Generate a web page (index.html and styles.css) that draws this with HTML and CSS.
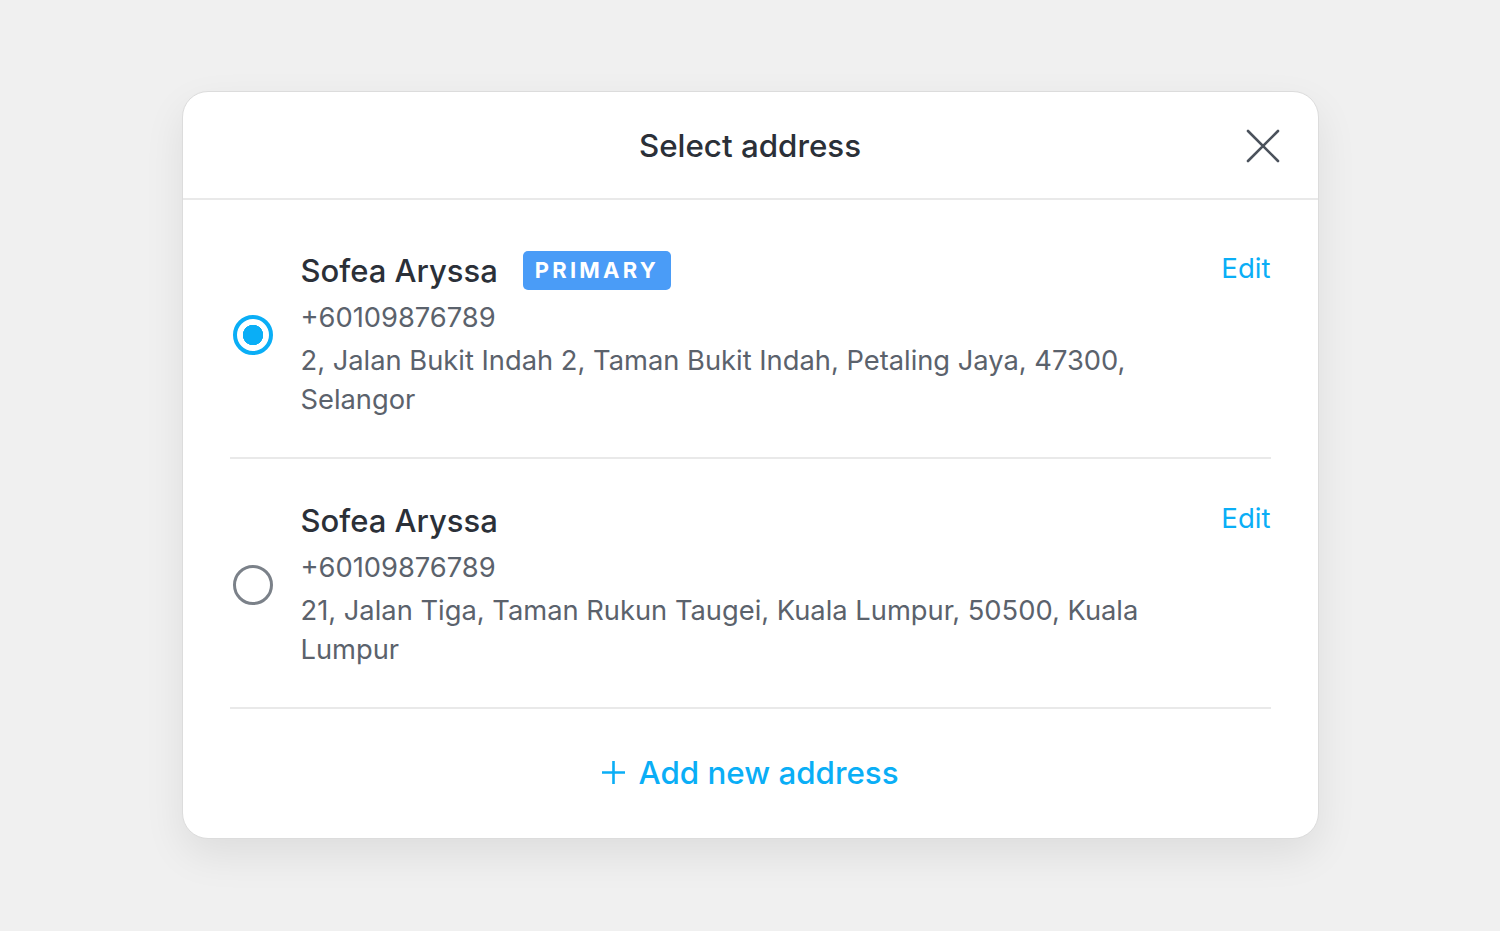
FILE: index.html
```html
<!doctype html>
<html lang="en">
  <head>
    <meta charset="UTF-8" />
    <meta name="viewport" content="width=device-width, initial-scale=1.0" />
    <title>Select address</title>
    <link rel="stylesheet" href="styles.css">
  </head>
  <body>
    <div class="modal">
      <div class="modal-header">
        <h1>Select address</h1>
        <button class="close-button" aria-label="Close">
          <svg width="34" height="34" viewBox="0 0 34 34" fill="none">
            <path d="M2 2 L32 32 M32 2 L2 32" stroke="#4b525c" stroke-width="2.6" stroke-linecap="round" />
          </svg>
        </button>
      </div>

      <div class="address-list">
        <div class="address-row">
          <span class="radio checked"></span>
          <div class="address-info">
            <div class="address-name">
              Sofea Aryssa
              <span class="badge">PRIMARY</span>
            </div>
            <div class="address-phone">+60109876789</div>
            <div class="address-text">2, Jalan Bukit Indah 2, Taman Bukit Indah, Petaling Jaya, 47300, Selangor</div>
          </div>
          <a class="edit-link" href="#">Edit</a>
        </div>

        <div class="address-row">
          <span class="radio"></span>
          <div class="address-info">
            <div class="address-name">Sofea Aryssa</div>
            <div class="address-phone">+60109876789</div>
            <div class="address-text">21, Jalan Tiga, Taman Rukun Taugei, Kuala Lumpur, 50500, Kuala Lumpur</div>
          </div>
          <a class="edit-link" href="#">Edit</a>
        </div>
      </div>

      <div class="modal-footer">
        <a class="add-link" href="#">
          <svg width="25" height="25" viewBox="0 0 25 25" fill="none">
            <path d="M12.5 1 V24 M1 12.5 H24" stroke="currentColor" stroke-width="2.6" />
          </svg>
          Add new address
        </a>
      </div>
    </div>
  </body>
</html>
```

FILE: styles.css
```css
:root {
  --color-primary: #0aaef6;
  --color-badge: #4a9cf7;
  --color-background: #f0f0f0;
  --color-text: #2b3038;
  --color-text-secondary: #5b626c;
  --color-border: #e9e9e9;
  --font-sans: Inter, "Noto Sans", sans-serif;
}

body {
  margin: 0;
  font-family: var(--font-sans);
  background: var(--color-background);
  color: var(--color-text);
  min-height: 100vh;
  display: flex;
  align-items: center;
  justify-content: center;
}

.modal {
  width: 1135px;
  margin-top: -2px;
  background: white;
  border: 1px solid #dcdcdc;
  border-radius: 26px;
  box-shadow: 0 16px 40px rgba(0, 0, 0, 0.08);
}

.modal-header {
  position: relative;
  height: 106px;
  display: flex;
  align-items: center;
  justify-content: center;
  border-bottom: 2px solid var(--color-border);
}

.modal-header h1 {
  margin: 2px 0 0;
  font-size: 31.3px;
  font-weight: 500;
  color: var(--color-text);
}

.close-button {
  position: absolute;
  right: 38px;
  top: 37px;
  padding: 0;
  border: none;
  background: none;
  display: flex;
  cursor: pointer;
}

.address-list {
  padding: 9px 47px 0;
}

.address-row {
  display: flex;
  align-items: center;
  padding: 42px 0 38px;
  border-bottom: 2px solid var(--color-border);
}

.radio {
  flex: none;
  box-sizing: border-box;
  width: 40px;
  height: 40px;
  margin: 0 28px 0 3px;
  border-radius: 50%;
  border: 3px solid #7b8189;
}

.radio.checked {
  border: 4px solid var(--color-primary);
  background: radial-gradient(circle, var(--color-primary) 0 10px, white 10.5px);
}

.address-info {
  flex: 1;
  padding-right: 24px;
}

.address-name {
  display: flex;
  align-items: center;
  font-size: 31px;
  line-height: 40px;
  font-weight: 450;
  color: var(--color-text);
  margin-bottom: 7px;
}

.badge {
  margin-left: 25px;
  padding: 0 12px;
  height: 39px;
  line-height: 39px;
  border-radius: 5px;
  background: var(--color-badge);
  color: white;
  font-size: 22px;
  font-weight: 700;
  letter-spacing: 3.2px;
}

.address-phone,
.address-text {
  font-size: 27.3px;
  line-height: 39px;
  color: var(--color-text-secondary);
}

.address-phone {
  margin-bottom: 4px;
}

.edit-link {
  align-self: flex-start;
  color: var(--color-primary);
  font-size: 27.6px;
  line-height: 40px;
  text-decoration: none;
  margin-top: -3px;
}

.modal-footer {
  height: 129px;
  display: flex;
  align-items: center;
  justify-content: center;
}

.add-link {
  display: flex;
  align-items: center;
  gap: 12px;
  margin-top: -1px;
  color: var(--color-primary);
  font-size: 31.3px;
  font-weight: 500;
  text-decoration: none;
}
```
